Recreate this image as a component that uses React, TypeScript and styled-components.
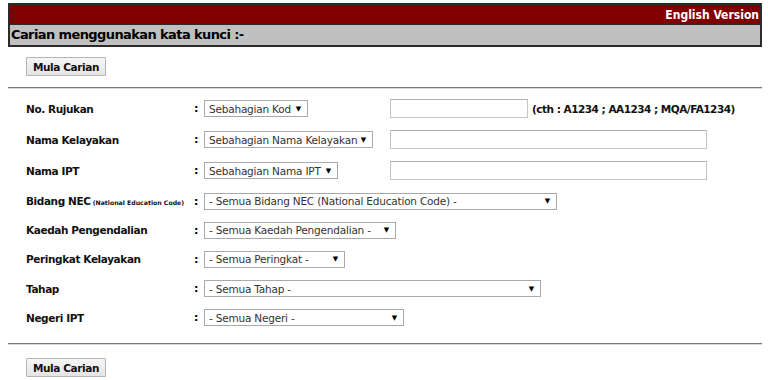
import React from "react";
import styled, { createGlobalStyle } from "styled-components";

const GlobalStyle = createGlobalStyle`
  html, body {
    margin: 0;
    padding: 0;
    background: #ffffff;
  }
  body {
    font-family: "DejaVu Sans", Verdana, sans-serif;
    color: #000;
  }
`;

type Field = {
  label: string;
  note?: string;
  select: string;
  selectWidth: number;
  input?: number;
  hint?: string;
  height: number;
};

const FIELDS: Field[] = [
  { label: "No. Rujukan", select: "Sebahagian Kod", selectWidth: 104, input: 138, hint: "(cth : A1234 ; AA1234 ; MQA/FA1234)", height: 31 },
  { label: "Nama Kelayakan", select: "Sebahagian Nama Kelayakan", selectWidth: 169, input: 317, height: 31 },
  { label: "Nama IPT", select: "Sebahagian Nama IPT", selectWidth: 134, input: 317, height: 31 },
  { label: "Bidang NEC", note: "(National Education Code)", select: "- Semua Bidang NEC (National Education Code) -", selectWidth: 353, height: 30 },
  { label: "Kaedah Pengendalian", select: "- Semua Kaedah Pengendalian -", selectWidth: 192, height: 28 },
  { label: "Peringkat Kelayakan", select: "- Semua Peringkat -", selectWidth: 141, height: 30 },
  { label: "Tahap", select: "- Semua Tahap -", selectWidth: 337, height: 29 },
  { label: "Negeri IPT", select: "- Semua Negeri -", selectWidth: 200, height: 29 },
];

const App: React.FC = () => {
  return (
    <>
      <GlobalStyle />
      <Page>
        <HeaderBox>
          <TopBar>
            <LangLink>English Version</LangLink>
          </TopBar>
          <TitleBar>Carian menggunakan kata kunci :-</TitleBar>
        </HeaderBox>

        <ButtonRow top={10} bottom={11}>
          <SearchButton>Mula Carian</SearchButton>
        </ButtonRow>

        <Divider />

        <FormGrid>
          {FIELDS.map((f) => (
            <FormRow key={f.label} height={f.height}>
              <Label>
                {f.label}
                {f.note && <SmallNote> {f.note}</SmallNote>}
              </Label>
              <Colon>:</Colon>
              <Controls>
                <SelectBox width={f.selectWidth}>
                  <span>{f.select}</span>
                  <Arrow>▼</Arrow>
                </SelectBox>
                {f.input && <TextInput width={f.input} />}
                {f.hint && <Hint>{f.hint}</Hint>}
              </Controls>
            </FormRow>
          ))}
        </FormGrid>

        <Divider />

        <ButtonRow top={13} bottom={4}>
          <SearchButton>Mula Carian</SearchButton>
        </ButtonRow>
      </Page>
    </>
  );
};

const Page = styled.div`
  padding: 3px 6px 0 8px;
  width: 768px;
  box-sizing: border-box;
`;

const HeaderBox = styled.div`
  border: 2px solid #2b2b2b;
  display: flex;
  flex-direction: column;
`;

const TopBar = styled.div`
  background-color: #800000;
  height: 19px;
  display: flex;
  justify-content: flex-end;
  align-items: center;
  padding-right: 1px;
  border-bottom: 1px solid #2b2b2b;
`;

const LangLink = styled.span`
  font-family: "DejaVu Sans Condensed", Tahoma, sans-serif;
  font-weight: bold;
  font-size: 12px;
  color: #ffffff;
`;

const TitleBar = styled.div`
  background-color: #c0c0c0;
  height: 20px;
  line-height: 20px;
  padding-left: 1px;
  font-weight: bold;
  font-size: 13px;
  letter-spacing: -0.6px;
  color: #000;
`;

const ButtonRow = styled.div<{ top: number; bottom: number }>`
  display: flex;
  padding: ${(p) => p.top}px 0 ${(p) => p.bottom}px 18px;
`;

const SearchButton = styled.button`
  font-family: "DejaVu Sans", Verdana, sans-serif;
  font-weight: bold;
  font-size: 10.5px;
  letter-spacing: -0.4px;
  color: #111;
  width: 80px;
  height: 19px;
  padding: 0;
  background: linear-gradient(#f6f6f6, #e4e4e4);
  border: 1px solid #b4b4b4;
  border-radius: 1px;
`;

const Divider = styled.hr`
  margin: 0;
  border: none;
  border-top: 1px solid #7a7a7a;
  border-bottom: 1px solid #d8d8d8;
`;

const FormGrid = styled.div`
  display: flex;
  flex-direction: column;
  padding: 4px 0 11px 18px;
`;

const FormRow = styled.div<{ height: number }>`
  display: grid;
  grid-template-columns: 168px 10px 1fr;
  align-items: center;
  height: ${(p) => p.height}px;
`;

const Label = styled.div`
  font-weight: bold;
  font-size: 10.5px;
  letter-spacing: -0.4px;
  color: #111;
  white-space: nowrap;
`;

const SmallNote = styled.span`
  font-size: 6.2px;
  letter-spacing: 0;
`;

const Colon = styled.div`
  font-weight: bold;
  font-size: 11px;
`;

const Controls = styled.div`
  display: grid;
  grid-template-columns: 186px auto auto;
  justify-content: start;
  align-items: center;
`;

const SelectBox = styled.div<{ width: number }>`
  width: ${(p) => p.width}px;
  height: 17px;
  box-sizing: border-box;
  border: 1px solid #a9a9a9;
  background: #fff;
  display: flex;
  align-items: center;
  justify-content: space-between;
  padding: 0 6px 0 4px;
  font-size: 10.5px;
  letter-spacing: -0.2px;
  color: #333;
  white-space: nowrap;
`;

const Arrow = styled.span`
  font-size: 7px;
  color: #000;
`;

const TextInput = styled.input<{ width: number }>`
  width: ${(p) => p.width}px;
  height: 19px;
  box-sizing: border-box;
  margin: 0;
  border: 1px solid #c4c4c4;
  border-top-color: #b0b0b0;
  background: #fff;
`;

const Hint = styled.span`
  margin-left: 4px;
  font-weight: bold;
  font-size: 10.5px;
  letter-spacing: -0.5px;
  color: #111;
  white-space: nowrap;
`;

export default App;
